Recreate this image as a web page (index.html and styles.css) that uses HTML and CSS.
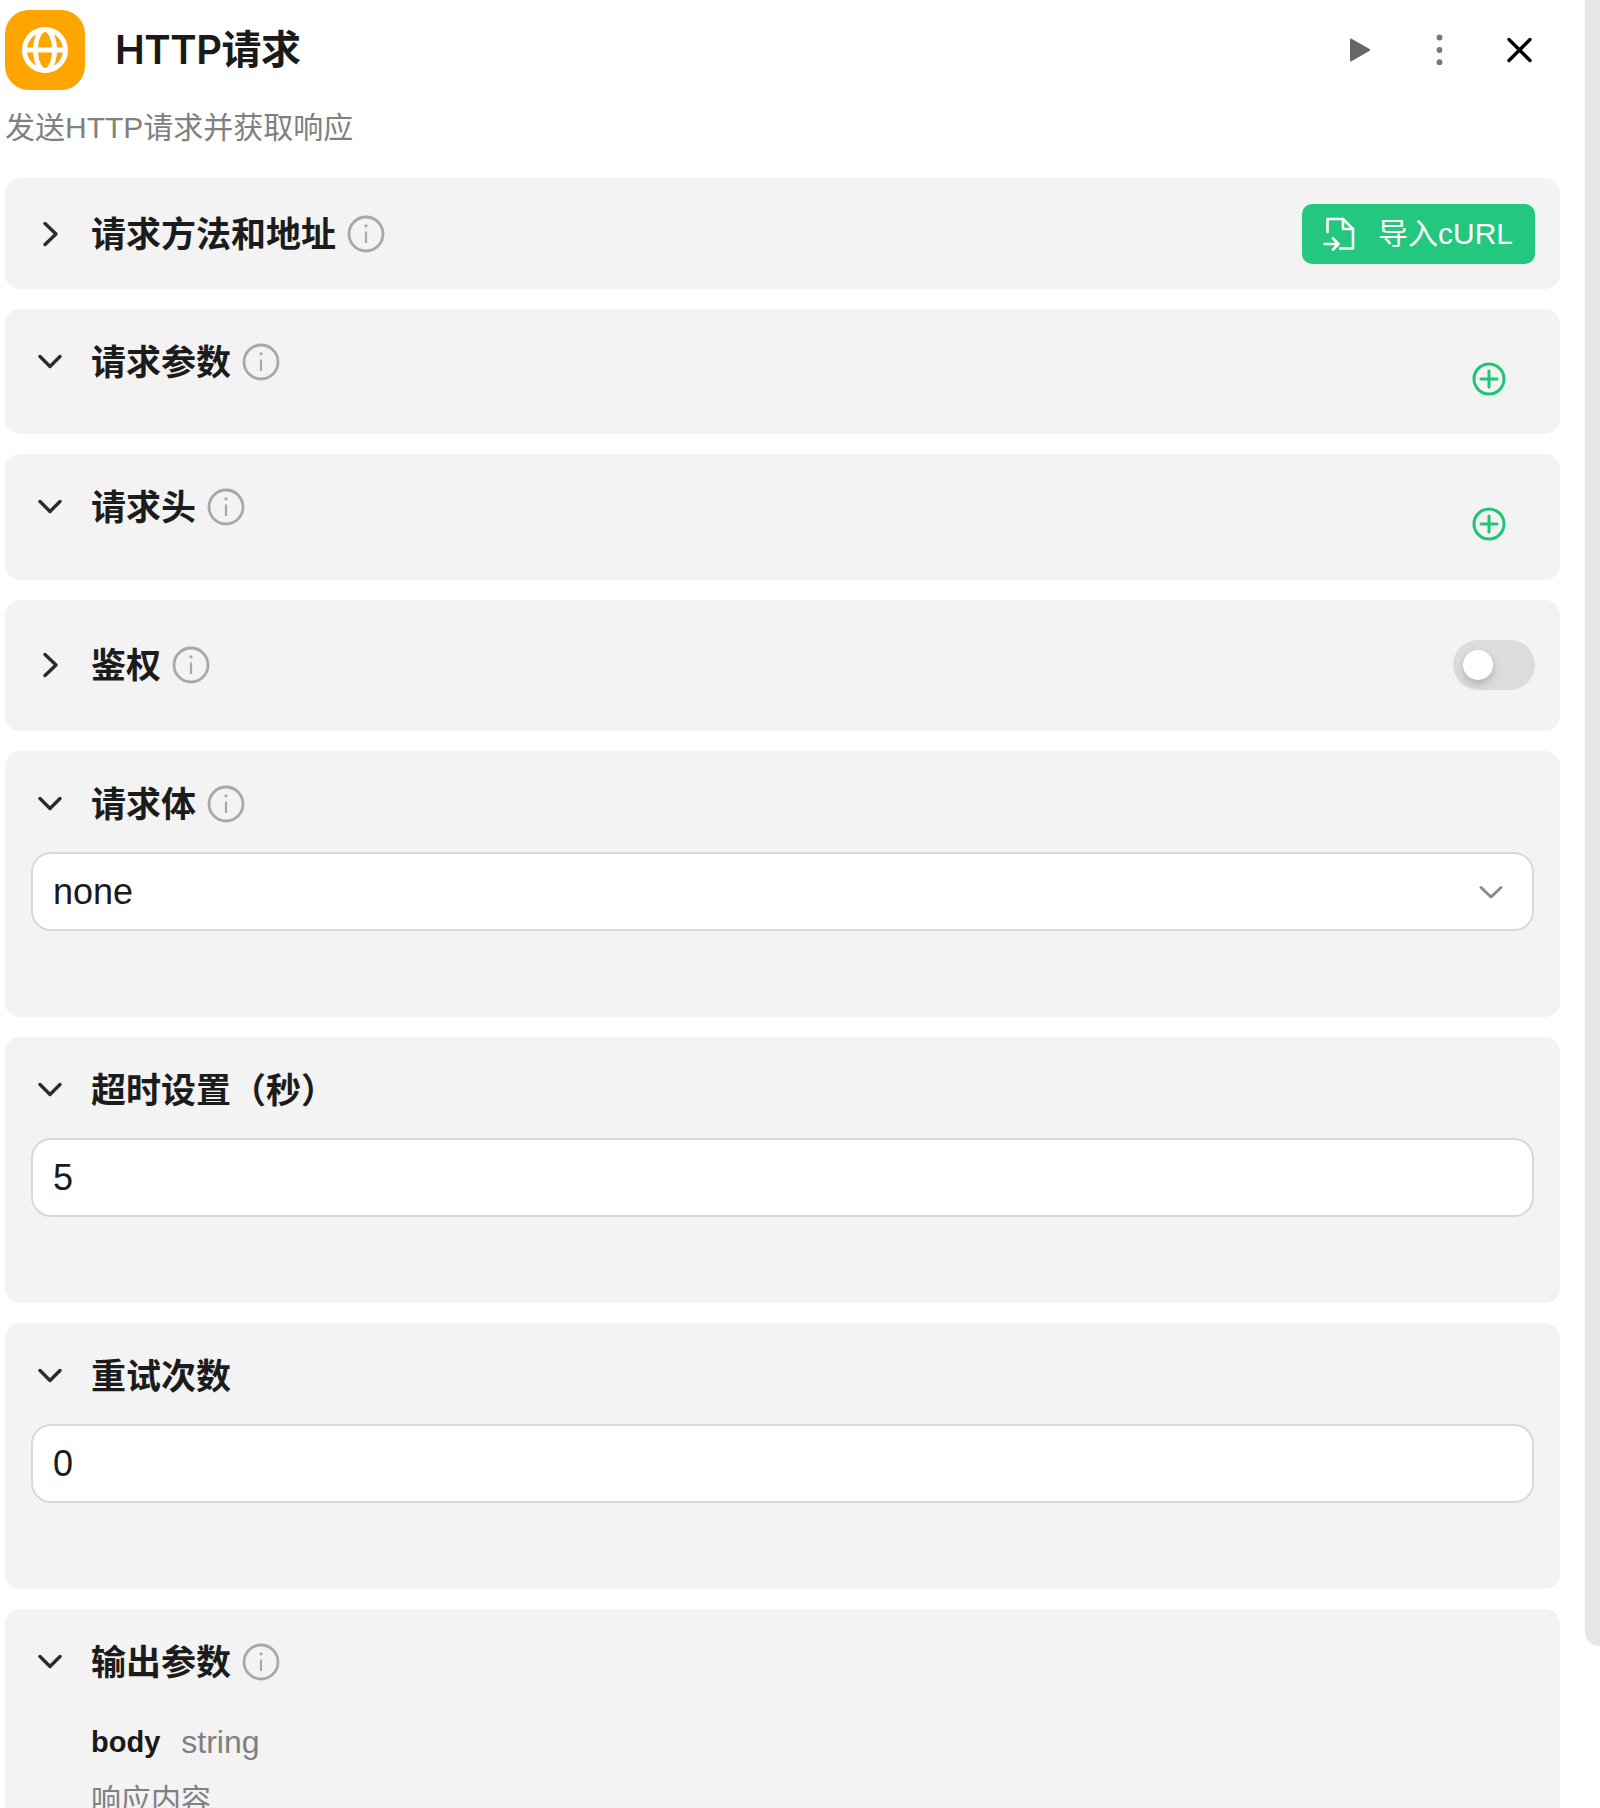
FILE: index.html
```html
<!DOCTYPE html>
<html lang="zh-CN">
<head>
  <meta charset="UTF-8" />
  <title>HTTP请求</title>
  <link rel="stylesheet" href="styles.css">
</head>
<body>
  <main class="panel">
    <header class="top">
      <div class="logo">
        <svg width="54" height="54" viewBox="0 0 54 54" fill="none" stroke="#fff" stroke-width="5">
          <circle cx="27" cy="27" r="20.5"/>
          <ellipse cx="27" cy="27" rx="9.5" ry="20.5"/>
          <path d="M7 27H47"/>
        </svg>
      </div>
      <h1 class="top-title">HTTP请求</h1>
      <div class="top-actions">
        <button class="icon-btn">
          <svg width="40" height="40" viewBox="0 0 40 40"><path d="M10 9.5a1 1 0 0 1 1.5-.8L29.6 19a1 1 0 0 1 0 1.8L11.5 31.2a1 1 0 0 1-1.5-.8z" fill="#666"/></svg>
        </button>
        <button class="icon-btn">
          <svg width="40" height="40" viewBox="0 0 40 40" fill="#777"><circle cx="19.5" cy="7.5" r="2.9"/><circle cx="19.5" cy="20" r="2.9"/><circle cx="19.5" cy="32.2" r="2.9"/></svg>
        </button>
        <button class="icon-btn">
          <svg width="40" height="40" viewBox="0 0 40 40" fill="none" stroke="#000" stroke-width="3.4" stroke-linecap="round"><path d="M9 9.5L30 30.5M30 9.5L9 30.5"/></svg>
        </button>
      </div>
    </header>
    <p class="desc">发送HTTP请求并获取响应</p>

    <section class="card card-method">
      <div class="card-head">
        <span class="chev"><svg width="24" height="26" viewBox="0 0 24 26" fill="none" stroke="#2b2b2b" stroke-width="3.4" stroke-linecap="round" stroke-linejoin="round"><path d="M7 2.5L18 13L7 23.5"/></svg></span>
        <h2 class="card-title">请求方法和地址</h2>
        <svg class="info" viewBox="0 0 38 38" fill="none" stroke="#a8a8a8"><circle cx="19" cy="19" r="17" stroke-width="2.8"/><path d="M19 16.5V28" stroke-width="2.2"/><circle cx="19" cy="10.8" r="1.6" fill="#a8a8a8" stroke="none"/></svg>
        <button class="curl-btn">
          <svg width="32" height="34" viewBox="0 0 32 34" fill="none" stroke="#fff" stroke-width="2.6" stroke-linecap="round" stroke-linejoin="round"><path d="M4.5 15V2H20L30 12V31.5H17"/><path d="M20 2V12H30"/><path d="M1.5 27H15M10 21.5L15.5 27L10 32.5"/></svg>
          <span class="curl-text">导入cURL</span>
        </button>
      </div>
    </section>

    <section class="card card-params">
      <div class="card-head">
        <span class="chev"><svg width="24" height="24" viewBox="0 0 24 24" fill="none" stroke="#2b2b2b" stroke-width="3.4" stroke-linecap="round" stroke-linejoin="round"><path d="M2 6.5L12 16.5L22 6.5"/></svg></span>
        <h2 class="card-title">请求参数</h2>
        <svg class="info" viewBox="0 0 38 38" fill="none" stroke="#a8a8a8"><circle cx="19" cy="19" r="17" stroke-width="2.8"/><path d="M19 16.5V28" stroke-width="2.2"/><circle cx="19" cy="10.8" r="1.6" fill="#a8a8a8" stroke="none"/></svg>
        <svg class="add" viewBox="0 0 34 34" fill="none" stroke="#1fc574" stroke-width="3"><circle cx="17" cy="17" r="15"/><path d="M17 9V25M9 17H25" stroke-linecap="round"/></svg>
      </div>
    </section>

    <section class="card card-headers">
      <div class="card-head">
        <span class="chev"><svg width="24" height="24" viewBox="0 0 24 24" fill="none" stroke="#2b2b2b" stroke-width="3.4" stroke-linecap="round" stroke-linejoin="round"><path d="M2 6.5L12 16.5L22 6.5"/></svg></span>
        <h2 class="card-title">请求头</h2>
        <svg class="info" viewBox="0 0 38 38" fill="none" stroke="#a8a8a8"><circle cx="19" cy="19" r="17" stroke-width="2.8"/><path d="M19 16.5V28" stroke-width="2.2"/><circle cx="19" cy="10.8" r="1.6" fill="#a8a8a8" stroke="none"/></svg>
        <svg class="add" viewBox="0 0 34 34" fill="none" stroke="#1fc574" stroke-width="3"><circle cx="17" cy="17" r="15"/><path d="M17 9V25M9 17H25" stroke-linecap="round"/></svg>
      </div>
    </section>

    <section class="card card-auth">
      <div class="card-head">
        <span class="chev"><svg width="24" height="26" viewBox="0 0 24 26" fill="none" stroke="#2b2b2b" stroke-width="3.4" stroke-linecap="round" stroke-linejoin="round"><path d="M7 2.5L18 13L7 23.5"/></svg></span>
        <h2 class="card-title">鉴权</h2>
        <svg class="info" viewBox="0 0 38 38" fill="none" stroke="#a8a8a8"><circle cx="19" cy="19" r="17" stroke-width="2.8"/><path d="M19 16.5V28" stroke-width="2.2"/><circle cx="19" cy="10.8" r="1.6" fill="#a8a8a8" stroke="none"/></svg>
        <span class="toggle"><span class="knob"></span></span>
      </div>
    </section>

    <section class="card card-field">
      <div class="card-head">
        <span class="chev"><svg width="24" height="24" viewBox="0 0 24 24" fill="none" stroke="#2b2b2b" stroke-width="3.4" stroke-linecap="round" stroke-linejoin="round"><path d="M2 6.5L12 16.5L22 6.5"/></svg></span>
        <h2 class="card-title">请求体</h2>
        <svg class="info" viewBox="0 0 38 38" fill="none" stroke="#a8a8a8"><circle cx="19" cy="19" r="17" stroke-width="2.8"/><path d="M19 16.5V28" stroke-width="2.2"/><circle cx="19" cy="10.8" r="1.6" fill="#a8a8a8" stroke="none"/></svg>
      </div>
      <div class="input">
        <span>none</span>
        <svg class="select-arrow" width="26" height="16" viewBox="0 0 26 16" fill="none" stroke="#8c8c8c" stroke-width="3" stroke-linecap="round" stroke-linejoin="round"><path d="M3 3.5L13 13L23 3.5"/></svg>
      </div>
    </section>

    <section class="card card-field">
      <div class="card-head">
        <span class="chev"><svg width="24" height="24" viewBox="0 0 24 24" fill="none" stroke="#2b2b2b" stroke-width="3.4" stroke-linecap="round" stroke-linejoin="round"><path d="M2 6.5L12 16.5L22 6.5"/></svg></span>
        <h2 class="card-title">超时设置（秒）</h2>
      </div>
      <div class="input"><span>5</span></div>
    </section>

    <section class="card card-field">
      <div class="card-head">
        <span class="chev"><svg width="24" height="24" viewBox="0 0 24 24" fill="none" stroke="#2b2b2b" stroke-width="3.4" stroke-linecap="round" stroke-linejoin="round"><path d="M2 6.5L12 16.5L22 6.5"/></svg></span>
        <h2 class="card-title">重试次数</h2>
      </div>
      <div class="input"><span>0</span></div>
    </section>

    <section class="card card-output">
      <div class="card-head">
        <span class="chev"><svg width="24" height="24" viewBox="0 0 24 24" fill="none" stroke="#2b2b2b" stroke-width="3.4" stroke-linecap="round" stroke-linejoin="round"><path d="M2 6.5L12 16.5L22 6.5"/></svg></span>
        <h2 class="card-title">输出参数</h2>
        <svg class="info" viewBox="0 0 38 38" fill="none" stroke="#a8a8a8"><circle cx="19" cy="19" r="17" stroke-width="2.8"/><path d="M19 16.5V28" stroke-width="2.2"/><circle cx="19" cy="10.8" r="1.6" fill="#a8a8a8" stroke="none"/></svg>
      </div>
      <div class="output-row">
        <span class="output-name">body</span>
        <span class="output-type">string</span>
      </div>
      <p class="output-desc">响应内容</p>
    </section>
  </main>
  <div class="scrollbar"></div>
</body>
</html>
```

FILE: styles.css
```css
html, body {
  margin: 0;
  height: 1808px;
  overflow: hidden;
  background-color: #fff;
}

body {
  display: flex;
  justify-content: space-between;
  align-items: flex-start;
  font-family: "Liberation Sans", "Noto Sans CJK SC", sans-serif;
  color: #1a1a1a;
}

.panel {
  width: 1555px;
  margin-left: 5px;
}

.scrollbar {
  width: 15px;
  height: 1646px;
  background-color: #e5e6e8;
  border-bottom-left-radius: 14px;
}

/* Header */
.top {
  display: flex;
  align-items: center;
  height: 80px;
  margin-top: 10px;
}

.logo {
  display: flex;
  align-items: center;
  justify-content: center;
  width: 80px;
  height: 80px;
  border-radius: 24px;
  background-color: #ffa500;
}

.top-title {
  margin: 0 0 0 30px;
  font-family: "Inter", "Noto Sans CJK SC", sans-serif;
  font-size: 40px;
  font-weight: 600;
  letter-spacing: -0.5px;
  line-height: 46px;
}

.top-actions {
  display: flex;
  gap: 40px;
  margin-left: auto;
  margin-right: 20px;
}

.icon-btn {
  display: block;
  width: 40px;
  height: 40px;
  padding: 0;
  border: none;
  background: none;
}

.desc {
  margin: 18px 0 30px;
  height: 40px;
  font-size: 30px;
  line-height: 40px;
  color: #808080;
}

/* Cards */
.card {
  margin-bottom: 20px;
  padding: 30px 26px 0;
  background-color: #f3f3f3;
  border-radius: 15px;
  box-sizing: border-box;
}

.card-method { height: 111px; padding-top: 33px; }
.card-params { height: 125px; }
.card-headers { height: 126px; }
.card-auth { height: 131px; padding-top: 42px; }
.card-field { height: 266px; }
.card-output { height: 260px; }

.card-head {
  display: flex;
  align-items: center;
  height: 46px;
}

.chev {
  display: flex;
  justify-content: center;
  flex: none;
  width: 38px;
  margin-right: 22px;
}

.card-title {
  position: relative;
  top: 1px;
  margin: 0;
  font-size: 35px;
  font-weight: 700;
  line-height: 46px;
  color: #1c1c1c;
}

.info {
  flex: none;
  width: 38px;
  height: 38px;
  margin-left: 11px;
}

.add {
  flex: none;
  align-self: flex-start;
  width: 34px;
  height: 34px;
  margin: 23px 28px 0 auto;
}

.curl-btn {
  display: flex;
  align-items: center;
  gap: 23px;
  margin-left: auto;
  margin-right: -1px;
  width: 233px;
  height: 60px;
  padding: 0 0 0 21px;
  box-sizing: border-box;
  border: none;
  border-radius: 10px;
  background-color: #23c77e;
  color: #fff;
  font-family: inherit;
  font-size: 30px;
  white-space: nowrap;
}

.curl-text {
  margin-bottom: 7px;
}

.toggle {
  display: flex;
  align-items: center;
  margin-left: auto;
  margin-right: -1px;
  width: 82px;
  height: 50px;
  padding-left: 10px;
  box-sizing: border-box;
  border-radius: 25px;
  background-color: #dcdcdc;
}

.knob {
  width: 30px;
  height: 30px;
  border-radius: 50%;
  background-color: #fff;
  box-shadow: 0 4px 8px rgba(0, 0, 0, 0.2);
}

/* Fields */
.input {
  display: flex;
  align-items: center;
  justify-content: space-between;
  height: 79px;
  margin-top: 25px;
  padding: 0 28px 0 20px;
  box-sizing: border-box;
  background-color: #fff;
  border: 2.5px solid #d9d9d9;
  border-radius: 20px;
  font-size: 36px;
  color: #1a1a1a;
}

.select-arrow {
  flex: none;
}

/* Output */
.output-row {
  display: flex;
  align-items: center;
  gap: 21px;
  margin: 39px 0 0 60px;
  height: 36px;
}

.output-name {
  font-size: 29px;
  font-weight: 700;
}

.output-type {
  font-size: 32px;
  color: #808080;
}

.output-desc {
  margin: 20px 0 0 60px;
  font-size: 30px;
  line-height: 40px;
  color: #808080;
}
```
